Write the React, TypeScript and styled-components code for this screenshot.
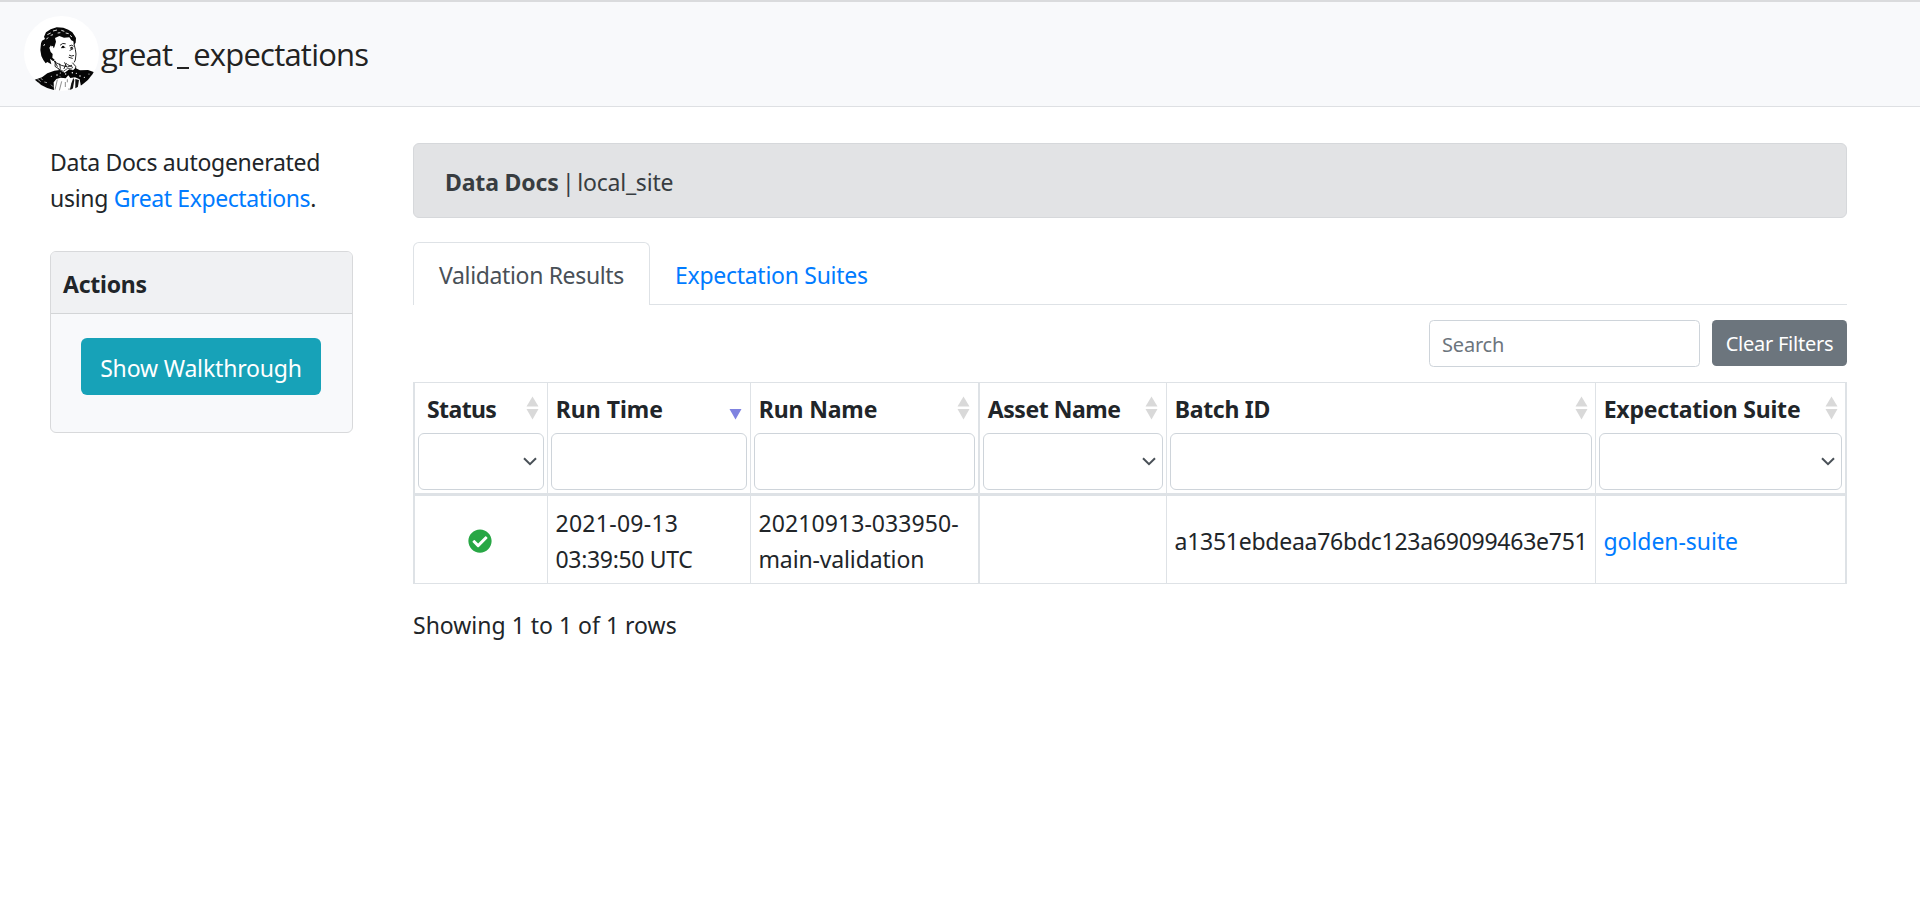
import React from 'react';
import styled, { createGlobalStyle } from 'styled-components';
import { FaCheckCircle } from 'react-icons/fa';

const GlobalStyle = createGlobalStyle`
  *, *::before, *::after { box-sizing: border-box; }
  body {
    margin: 0;
    background: #fff;
    color: #212529;
    font: 400 23px/36px "Noto Sans", "Open Sans", sans-serif;
  }
`;

const Label = styled.span<{ $track?: number; $space?: number }>`
  letter-spacing: ${(p) => p.$track ?? 0}px;
  word-spacing: ${(p) => p.$space ?? 0}px;
  white-space: nowrap;
`;

const TextLink = styled.a<{ $track?: number }>`
  color: #007bff;
  text-decoration: none;
  letter-spacing: ${(p) => p.$track ?? 0}px;
`;

const Navbar = styled.header`
  display: flex;
  align-items: flex-start;
  height: 107px;
  padding: 14px 0 0 24px;
  border-top: 2px solid #dadbdd;
  border-bottom: 1px solid #dee0e3;
  background: #f8f9fb;
`;

const Portrait = styled.svg`
  width: 75px;
  height: 75px;
  flex: none;
`;

const Wordmark = styled.div`
  display: flex;
  padding: 18px 0 0 2px;
  color: #222;
  font: 400 31px/40px "Open Sans", sans-serif;
`;

const WordPart = styled.span<{ $track: number }>`
  letter-spacing: ${(p) => p.$track}px;
`;

const Underscore = styled.span`
  width: 12px;
  height: 2px;
  margin: 33px 4px 0 5px;
  background: #222;
`;

const Page = styled.div`
  display: flex;
  align-items: flex-start;
  padding: 36px 73px 0 50px;
`;

const Sidebar = styled.aside`
  width: 303px;
  margin-right: 60px;
  flex: none;
`;

const Intro = styled.p`
  margin: 0;
  padding-top: 1px;
`;

const Card = styled.section`
  height: 182px;
  margin-top: 35px;
  border: 1px solid #d8d9db;
  border-radius: 6px;
  background: #f8f9fb;
  overflow: hidden;
`;

const CardHeader = styled.h4`
  height: 62px;
  margin: 0;
  padding: 14px 0 0 12px;
  border-bottom: 1px solid #d3d5d7;
  background: #f0f1f3;
  font-size: 23px;
  font-weight: 700;
`;

const WalkthroughButton = styled.button`
  display: block;
  width: 240px;
  height: 57px;
  margin: 24px auto 0 30px;
  padding: 2px 0 0;
  border: 0;
  border-radius: 6px;
  background: #17a2b8;
  color: #fff;
  font: inherit;
`;

const Main = styled.main`
  flex: 1;
  min-width: 0;
`;

const Banner = styled.div`
  height: 75px;
  padding: 20px 0 0 31px;
  border: 1px solid #d6d8db;
  border-radius: 6px;
  background: #e2e3e5;
  color: #383d41;
`;

const Tabs = styled.nav`
  display: flex;
  height: 63px;
  margin-top: 24px;
  border-bottom: 1px solid #dee2e6;
`;

const Tab = styled.a<{ $active?: boolean }>`
  height: 63px;
  padding: 14px 0 0 ${(p) => (p.$active ? 25 : 24)}px;
  width: ${(p) => (p.$active ? 237 : 240)}px;
  border: 1px solid ${(p) => (p.$active ? '#dee2e6' : 'transparent')};
  border-bottom: 0;
  border-radius: 6px 6px 0 0;
  background: ${(p) => (p.$active ? '#fff' : 'transparent')};
  color: ${(p) => (p.$active ? '#495057' : '#007bff')};
`;

const Toolbar = styled.div`
  display: flex;
  justify-content: flex-end;
  align-items: flex-start;
  gap: 12px;
  height: 77px;
  padding-top: 15px;
  font-size: 20px;
  line-height: 30px;
`;

const SearchBox = styled.input`
  width: 271px;
  height: 47px;
  padding: 1px 12px 0 12px;
  border: 1px solid #ced4da;
  border-radius: 4.5px;
  background: #fff;
  font: inherit;
  letter-spacing: -0.18px;
  outline: 0;
  &::placeholder { color: #6c757d; opacity: 1; }
`;

const ClearButton = styled.button`
  width: 135px;
  height: 46px;
  padding: 2px 0 0;
  border: 0;
  border-radius: 4.5px;
  background: #6c757d;
  color: #fff;
  font: inherit;
`;

const Table = styled.table`
  width: 1434px;
  table-layout: fixed;
  border-collapse: separate;
  border-spacing: 0;
`;

const line = '#dee2e6';

const HeadCell = styled.th<{ $width: number; $left: number; $right?: number }>`
  width: ${(p) => p.$width}px;
  height: 114px;
  padding: 0 3px;
  border: solid ${line};
  border-width: 1px ${(p) => p.$right ?? 0}px 3px ${(p) => p.$left}px;
  text-align: left;
  vertical-align: top;
`;

const HeadTitle = styled.div<{ $indent: number; $end: number }>`
  display: flex;
  justify-content: space-between;
  height: 50px;
  padding: 8px ${(p) => p.$end}px 0 ${(p) => p.$indent}px;
`;

const SortIcon = styled.svg`
  width: 13px;
  height: 24px;
  margin-top: 5px;
  flex: none;
`;

const FilterBox = styled.div`
  display: flex;
  align-items: center;
  justify-content: flex-end;
  height: 57px;
  padding-right: 6px;
  border: 1px solid #ced4da;
  border-radius: 6px;
  background: #fff;
`;

const Chevron = styled.svg`
  width: 14px;
  height: 9px;
`;

const BodyCell = styled.td<{ $left: number; $right?: number; $center?: boolean }>`
  height: 88px;
  padding: ${(p) => (p.$center ? '3px 2px 0 0' : '3px 0 0 7.5px')};
  border: solid ${line};
  border-width: 0 ${(p) => p.$right ?? 0}px 1px ${(p) => p.$left}px;
  text-align: ${(p) => (p.$center ? 'center' : 'left')};
  vertical-align: middle;
  white-space: nowrap;
  svg { display: block; margin: 0 auto; }
`;

const Summary = styled.div`
  padding-top: 23px;
`;

type Column = {
  title: string;
  track: number;
  width: number;
  left: number;
  right?: number;
  indent: number;
  end: number;
  select?: boolean;
  sorted?: boolean;
};

const columns: Column[] = [
  { title: 'Status', track: -0.6, width: 134, left: 2, indent: 9, end: 5, select: true },
  { title: 'Run Time', track: 0, width: 203, left: 1, indent: 4.7, end: 5, sorted: true },
  { title: 'Run Name', track: -0.13, width: 228, left: 1, indent: 4.7, end: 5 },
  { title: 'Asset Name', track: -0.44, width: 188, left: 2, indent: 4.7, end: 5, select: true },
  { title: 'Batch ID', track: -0.3, width: 429, left: 1, indent: 4.7, end: 4.5 },
  { title: 'Expectation Suite', track: -0.22, width: 252, left: 1, right: 2, indent: 4.7, end: 4.5, select: true },
];

function PipPortrait() {
  return (
    <Portrait viewBox="12 18 225 225">
      <defs>
        <clipPath id="disc"><circle cx="124.5" cy="130.5" r="112" /></clipPath>
      </defs>
      <circle cx="124.5" cy="130.5" r="112.5" fill="#fff" />
      <g clipPath="url(#disc)">
        <path d="M72 80 L78 67 L92 58 L110 52 L130 53 L145 59 L157 67 L163 76 L168 84 L167 98 L162 104 L160 94 L154 91 L148 82 L132 83 L118 78 L105 84 L108 95 L103 112 L97 116 L93 106 L88 113 L92 126 L98 132 L97 143 L104 149 L99 153 L90 146 L94 163 L82 156 L77 160 L70 150 L64 138 L61 120 L63 100 L66 92 L75 87 Z" fill="#070707" />
        <path d="M82 74 l10-5 M99 63 l12-3 M124 61 l9 3 M137 69 l9 2 M79 87 l6-4 M92 76 l7-2 M113 69 l8-1 M71 108 l3 -6 M150 76 l6 5" stroke="#ddd" strokeWidth="3" fill="none" />
        <path d="M94 109 q7-4 6 6 q-1 10-6 8" fill="#fff" />
        <g fill="none" stroke="#151515" strokeWidth="2.8" strokeLinecap="round">
          <path d="M121 105 q7-8 15-4 M124 113 q6-6 11-1 M149 107 q7-4 11 1 M151 114 q5-3 8 1" />
          <path d="M162 102 L166 118 L168 132 L166 150 L163 156 M150 121 l8-4 M148 136 q6 4 13 1 M147 142 l10 3" />
          <path d="M98 149 L108 158 L124 166 L143 171 L155 166 M103 153 L112 169 M119 162 l2 13 M134 158 l5 11 M143 164 l15 8" />
          <path d="M106 154 L105 169 L121 180 M139 160 l-7 16 M158 159 l9 10 v8" />
        </g>
        <circle cx="129" cy="111" r="3.8" fill="#111" />
        <circle cx="155" cy="113" r="3" fill="#111" />
        <path d="M40 211 L66 202 L82 190 L103 182 L119 180 L134 188 L148 178 L159 181 L166 174 L180 181 L204 180 L223 187 L216 202 L199 219 L184 235 L179 208 L165 202 L151 204 L145 196 L137 205 L122 203 L109 207 L101 217 L102 245 L75 240 L45 224 Z" fill="#050505" />
        <path d="M160 204 L163 210 L159 234 L153 243 L149 242 L154 220 Z" fill="#111" />
        <path d="M166 207 L177 210 L173 235 L166 237 Z" fill="#111" />
        <path d="M112 209 L105 239 M125 214 L118 242 M136 216 v15 M142 208 v9 M147 235 v6" stroke="#555" strokeWidth="2" fill="none" />
        <path d="M52 207 l10 8 M49 216 l10 5 M62 205 l6 4 M73 216 l8 2 M93 224 l6 6" stroke="#eee" strokeWidth="2" />
        <g fill="#fff">
          <circle cx="111" cy="195" r="2.3" /><circle cx="121" cy="189" r="1.8" />
          <circle cx="94" cy="199" r="1.6" /><circle cx="137" cy="192" r="2" />
          <circle cx="157" cy="188" r="2.2" /><circle cx="169" cy="190" r="1.8" />
          <circle cx="180" cy="198" r="2.2" /><circle cx="193" cy="202" r="1.8" />
          <circle cx="207" cy="192" r="1.6" /><circle cx="120" cy="199" r="1.4" />
        </g>
        <path d="M114 176 L130 184 L143 175 L157 177" fill="none" stroke="#222" strokeWidth="2.2" />
      </g>
    </Portrait>
  );
}

function Sorter({ sorted }: { sorted?: boolean }) {
  return (
    <SortIcon viewBox="0 0 13 24">
      {!sorted && <path d="M6.5 0.5 L12.5 10.5 H0.5 Z" fill="#d9d9d9" />}
      <path d="M0.5 13 H12.5 L6.5 23.5 Z" fill={sorted ? '#7f83e0' : '#d9d9d9'} />
    </SortIcon>
  );
}

export default function App() {
  return (
    <>
      <GlobalStyle />
      <Navbar>
        <PipPortrait />
        <Wordmark>
          <WordPart $track={-0.8}>great</WordPart>
          <Underscore />
          <WordPart $track={-0.78}>expectations</WordPart>
        </Wordmark>
      </Navbar>
      <Page>
        <Sidebar>
          <Intro>
            <Label $track={-0.28}>Data Docs autogenerated</Label>
            <br />
            <Label $track={-0.3}>using </Label>
            <TextLink $track={-0.4}>Great Expectations</TextLink>.
          </Intro>
          <Card>
            <CardHeader><Label $track={-0.25}>Actions</Label></CardHeader>
            <WalkthroughButton><Label $track={-0.17}>Show Walkthrough</Label></WalkthroughButton>
          </Card>
        </Sidebar>
        <Main>
          <Banner>
            <Label as="strong" $track={-0.15}>Data Docs</Label>
            <Label $track={-0.6} $space={-2}> |</Label>
            <Label $track={-0.22} $space={-2.6}> local_site</Label>
          </Banner>
          <Tabs>
            <Tab $active><Label $track={-0.35}>Validation Results</Label></Tab>
            <Tab><Label $track={-0.28}>Expectation Suites</Label></Tab>
          </Tabs>
          <Toolbar>
            <SearchBox placeholder="Search" />
            <ClearButton><Label $track={-0.25}>Clear Filters</Label></ClearButton>
          </Toolbar>
          <Table>
            <thead>
              <tr>
                {columns.map((c) => (
                  <HeadCell key={c.title} $width={c.width} $left={c.left} $right={c.right}>
                    <HeadTitle $indent={c.indent} $end={c.end}>
                      <Label $track={c.track}>{c.title}</Label>
                      <Sorter sorted={c.sorted} />
                    </HeadTitle>
                    <FilterBox>
                      {c.select && (
                        <Chevron viewBox="0 0 14 9">
                          <path d="M1 1.2 L7 7.2 L13 1.2" fill="none" stroke="#495057" strokeWidth="2" />
                        </Chevron>
                      )}
                    </FilterBox>
                  </HeadCell>
                ))}
              </tr>
            </thead>
            <tbody>
              <tr>
                <BodyCell $left={2} $center><FaCheckCircle size={24} color="#28a745" /></BodyCell>
                <BodyCell $left={1}>
                  <Label $track={0.27}>2021-09-13</Label><br />
                  <Label $track={-0.32}>03:39:50 UTC</Label>
                </BodyCell>
                <BodyCell $left={1}>
                  <Label $track={0.08}>20210913-033950-</Label><br />
                  <Label $track={-0.14}>main-validation</Label>
                </BodyCell>
                <BodyCell $left={2} />
                <BodyCell $left={1}><Label $track={-0.26}>a1351ebdeaa76bdc123a69099463e751</Label></BodyCell>
                <BodyCell $left={1} $right={2}><TextLink $track={-0.06}>golden-suite</TextLink></BodyCell>
              </tr>
            </tbody>
          </Table>
          <Summary>Showing 1 to 1 of 1 rows</Summary>
        </Main>
      </Page>
    </>
  );
}
